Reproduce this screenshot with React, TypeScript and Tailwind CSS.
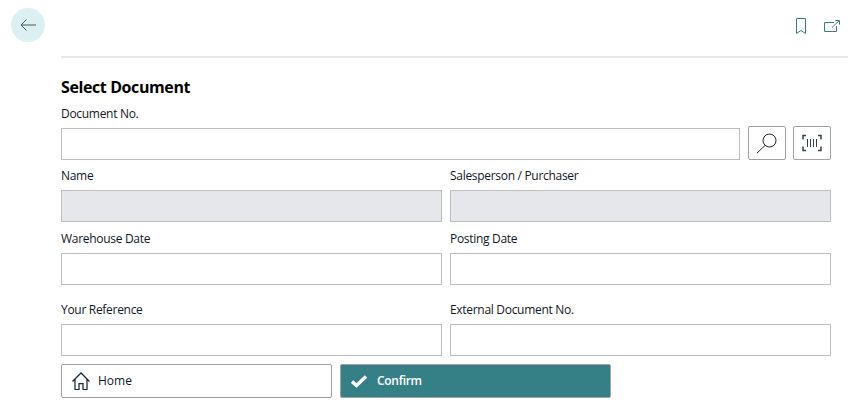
import React from 'react'

const font = { fontFamily: '"Open Sans", "Noto Sans", sans-serif' }

const labelClass = 'block h-[23px] pt-px text-xs leading-4 tracking-tight text-gray-900'

function Field({ label, disabled }: { label: string; disabled?: boolean }) {
  return (
    <div className="flex flex-col">
      <label className={labelClass}>{label}</label>
      <div className={`h-8 border border-[#bfbfbf] ${disabled ? 'bg-gray-200' : 'bg-white'}`} />
    </div>
  )
}

export default function App() {
  return (
    <div className="h-[413px] w-[854px] overflow-hidden bg-white" style={font}>
      <header className="flex">
        <div className="w-[61px] pt-2 pl-2.75">
          <button className="flex h-8.5 w-8.5 items-center justify-center rounded-full bg-[#dcf0f2] text-gray-600">
            <svg viewBox="0 0 16 12" className="h-3 w-4" fill="none" stroke="currentColor" strokeWidth="1">
              <path d="M16 6H1M6.5 .5L1 6l5.5 5.5" />
            </svg>
          </button>
        </div>
        <div className="flex h-[58px] w-[787px] items-start justify-end gap-4.5 border-b-2 border-gray-200 pt-4.5 pr-2 text-[#358086]">
          <svg viewBox="0 0 10 16" className="h-4 w-2.5" fill="none" stroke="currentColor" strokeWidth="1">
            <path d="M.5 .5h9v15L5 12.5 .5 15.5z" />
          </svg>
          <svg viewBox="0 0 16 12" className="mt-0.5 h-3 w-4" fill="none" stroke="currentColor" strokeWidth="1">
            <path d="M10 2.5H.5v9h12V6" />
            <path d="M8 7.5L15 .8M11.5 .5h4v4" />
          </svg>
        </div>
      </header>

      <main className="ml-[61px] w-[770px]">
        <h1 className="mt-4.5 text-base leading-snug font-bold tracking-tight text-black">Select Document</h1>

        <label className={`mt-1.75 ${labelClass}`}>Document No.</label>
        <div className="flex h-8 items-end gap-1.75">
          <div className="mr-0.25 h-8 flex-1 border border-[#bfbfbf]" />
          <button className="flex h-8.5 w-9.5 items-center justify-center rounded-xs border border-neutral-400 text-gray-800">
            <svg viewBox="0 0 24 24" className="h-6 w-6" fill="none" stroke="currentColor" strokeWidth="1">
              <circle cx="14.5" cy="9.5" r="6.5" />
              <path d="M10 14.5L2 22" />
            </svg>
          </button>
          <button className="flex h-8.5 w-9.5 items-center justify-center rounded-xs border border-neutral-400 text-gray-700">
            <svg viewBox="0 0 20 17" className="h-4.5 w-5" fill="none" stroke="currentColor" strokeWidth="1">
              <path d="M4 1H1v4M16 1h3v4M4 16H1v-4M16 16h3v-4" strokeWidth="1.5" />
              <path d="M5.5 4.5v8M8.5 4.5v8M11.5 4.5v8M14.5 4.5v8" />
            </svg>
          </button>
        </div>

        <div className="mt-1.75 grid grid-cols-2 gap-x-2">
          <Field label="Name" disabled />
          <Field label="Salesperson / Purchaser" disabled />
        </div>
        <div className="mt-2 grid grid-cols-2 gap-x-2">
          <Field label="Warehouse Date" />
          <Field label="Posting Date" />
        </div>
        <div className="mt-4 grid grid-cols-2 gap-x-2">
          <Field label="Your Reference" />
          <Field label="External Document No." />
        </div>

        <div className="mt-2 flex gap-2">
          <button className="flex h-8.5 w-[271px] items-center gap-2 rounded-xs border border-neutral-400 px-2.5 text-xs text-gray-900">
            <svg viewBox="0 0 18 18" className="h-4.5 w-4.5 text-gray-800" fill="none" stroke="currentColor" strokeWidth="1.25">
              <path d="M.5 9.5L9 1l8.5 8.5M3 7.5v10h4v-6h4v6h4v-10" />
            </svg>
            Home
          </button>
          <button className="flex h-8.5 w-[271px] items-center gap-2.5 rounded-xs border border-neutral-400 bg-[#358086] px-2.5 text-xs font-semibold tracking-tight text-white">
            <svg viewBox="0 0 16 13" className="h-3.5 w-4" fill="none" stroke="currentColor" strokeWidth="3.5">
              <path d="M1 7l4.5 4L15 2" />
            </svg>
            Confirm
          </button>
        </div>
      </main>
    </div>
  )
}
